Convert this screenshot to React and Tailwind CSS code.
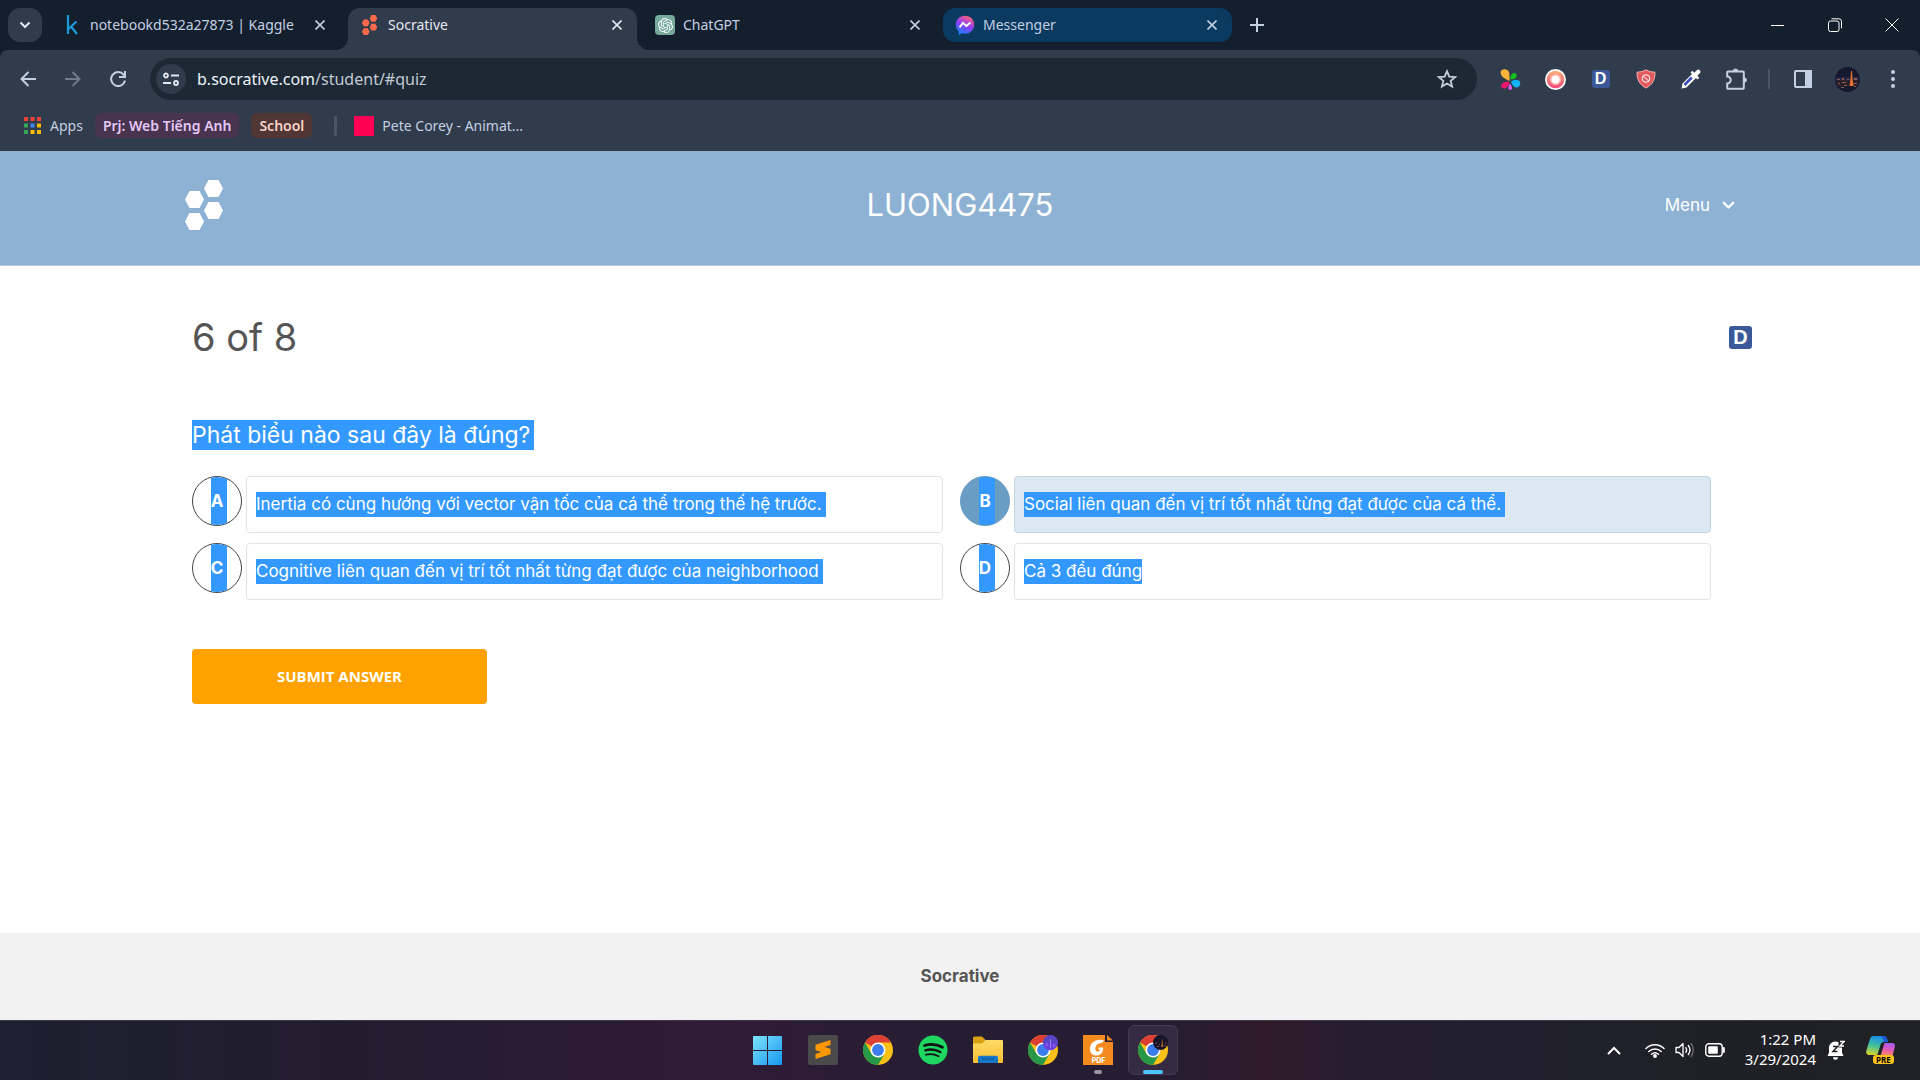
import React from "react";
import { SiOpenai } from "react-icons/si";

const hexes = [
  [28.5, 8.5],
  [9.5, 19.5],
  [28.5, 30.5],
  [9.5, 41.5],
];

function SocrativeLogo({ className }) {
  return (
    <svg viewBox="0 0 38 50" className={className} fill="currentColor" aria-hidden="true">
      {hexes.map(([x, y]) => (
        <polygon
          key={x + "-" + y}
          points={`${x - 9.5},${y} ${x - 5},${y - 8.5} ${x + 5},${y - 8.5} ${x + 9.5},${y} ${x + 5},${y + 8.5} ${x - 5},${y + 8.5}`}
        />
      ))}
    </svg>
  );
}

function MessengerIcon() {
  return (
    <svg viewBox="0 0 24 24" className="size-5" aria-hidden="true">
      <defs>
        <linearGradient id="msg" x1="0.25" y1="1" x2="0.7" y2="0">
          <stop offset="0" stopColor="#0a8cff" />
          <stop offset="0.5" stopColor="#8a3cff" />
          <stop offset="1" stopColor="#ff5f74" />
        </linearGradient>
      </defs>
      <path fill="url(#msg)" d="M12 1C5.600 1 1 5.600 1 11.700c0 3.200 1.300 6 3.500 7.900V24l3.800-2.200c1.200.3 2.400.5 3.700.5 6.400 0 11-4.500 11-10.600S18.400 1 12 1z" />
      <path d="M5.500 14.800 9.500 9.500l4.200 3.800 4.800-4.300" fill="none" stroke="#fff" strokeWidth="2.300" />
    </svg>
  );
}

function CloseIcon() {
  return (
    <svg viewBox="0 0 10 10" className="size-2.5" fill="none" stroke="currentColor" strokeWidth="1.600" aria-hidden="true">
      <path d="M.5.5l9 9M9.500.5l-9 9" />
    </svg>
  );
}

function Tab({ icon, title, kind, className }) {
  const skin =
    kind === "active"
      ? "h-[42px] rounded-t-xl bg-[#303b4b] pb-2 text-[#e3e8f0]"
      : kind === "group"
      ? "mb-2 h-[34px] rounded-xl bg-[#0a3a5f] text-[#c3cfe3]"
      : "mb-2 h-[34px] text-[#c3cfe3]";
  return (
    <div className={`relative flex min-w-0 items-center px-3 ${skin} ${className}`}>
      {kind === "active" && (
        <>
          <span className="absolute bottom-0 -left-3 size-3 bg-[radial-gradient(circle_at_0_0,transparent_12px,#303b4b_12px)]" />
          <span className="absolute bottom-0 -right-3 size-3 bg-[radial-gradient(circle_at_100%_0,transparent_12px,#303b4b_12px)]" />
        </>
      )}
      <span className="flex w-5 shrink-0 justify-center">{icon}</span>
      <span className="ml-2 flex-1 truncate text-[14px] leading-5">{title}</span>
      <button type="button" aria-label={`Close ${title}`} className="flex size-4 items-center justify-center">
        <CloseIcon />
      </button>
    </div>
  );
}

function IconButton({ label, className = "", children }) {
  return (
    <button type="button" aria-label={label} className={`flex size-[45px] shrink-0 items-center justify-center ${className}`}>
      {children}
    </button>
  );
}

function DBadge({ className }) {
  return (
    <span className={`flex items-center justify-center rounded-[3px] bg-[#3b5998] font-['Liberation_Sans',sans-serif] leading-none font-bold text-white ${className}`}>D</span>
  );
}

function TabStrip() {
  return (
    <div className="flex h-[50px] items-end bg-[#141f2e] pl-2">
      <button type="button" aria-label="Search tabs" className="mb-2 flex h-[34px] w-[34px] shrink-0 items-center justify-center rounded-xl bg-[#303b4b] text-[#e3e8f0]">
        <svg viewBox="0 0 12 8" className="w-3" fill="none" stroke="currentColor" strokeWidth="2">
          <path d="M1.500 1.500 6 6l4.500-4.500" />
        </svg>
      </button>
      <Tab
        className="ml-2 w-[290px]"
        title="notebookd532a27873 | Kaggle"
        icon={
          <svg viewBox="0 0 12 20" className="h-5" fill="none" stroke="#1a9bd7" strokeWidth="2.200" aria-hidden="true">
            <path d="M2 0v19M10.500 6.500 2.500 14M5 11.500l6 7.500" />
          </svg>
        }
      />
      <Tab className="ml-2 w-[289px]" kind="active" title="Socrative" icon={<SocrativeLogo className="h-5 text-[#ff6b4a]" />} />
      <Tab
        className="ml-[6px] w-[292px]"
        title="ChatGPT"
        icon={
          <span className="flex size-5 items-center justify-center rounded-[4px] bg-[#74a99c] text-white">
            <SiOpenai className="size-[15px]" />
          </span>
        }
      />
      <Tab className="ml-2 w-[289px]" kind="group" title="Messenger" icon={<MessengerIcon />} />
      <button type="button" aria-label="New tab" className="mb-2 ml-2 flex size-[34px] items-center justify-center text-[#c3cfe3]">
        <svg viewBox="0 0 14 14" className="size-[14px]" stroke="currentColor" strokeWidth="2">
          <path d="M7 0v14M0 7h14" />
        </svg>
      </button>
      <div className="ml-auto flex h-full items-center text-white">
        <button type="button" aria-label="Minimize" className="flex h-12 w-[57px] items-center justify-center">
          <span className="h-px w-[13px] bg-white" />
        </button>
        <button type="button" aria-label="Restore" className="flex h-12 w-[57px] items-center justify-center">
          <svg viewBox="0 0 14 14" className="size-[14px]" fill="none" stroke="currentColor">
            <rect x=".5" y="3" width="10.500" height="10.500" rx="2" />
            <path d="M3.500.8H11a2.500 2.500 0 0 1 2.500 2.500v7" />
          </svg>
        </button>
        <button type="button" aria-label="Close window" className="flex h-12 w-[57px] items-center justify-center">
          <svg viewBox="0 0 14 14" className="size-[14px]" fill="none" stroke="currentColor">
            <path d="M.5.5l13 13M13.500.5l-13 13" />
          </svg>
        </button>
      </div>
    </div>
  );
}

function Toolbar() {
  return (
    <div className="flex h-[58px] items-center rounded-t-lg bg-[#303b4b] px-[5px] text-[#c3cfe3]">
      <IconButton label="Back">
        <svg viewBox="0 0 16 16" className="size-4" fill="none" stroke="currentColor" strokeWidth="2">
          <path d="M16 8H1.500M8.500 1 1.500 8l7 7" />
        </svg>
      </IconButton>
      <IconButton label="Forward" className="text-[#6f7a8b]">
        <svg viewBox="0 0 16 16" className="size-4" fill="none" stroke="currentColor" strokeWidth="2">
          <path d="M0 8h14.500M7.500 1l7 7-7 7" />
        </svg>
      </IconButton>
      <IconButton label="Reload">
        <svg viewBox="0 0 16 16" className="size-4" fill="none" stroke="currentColor" strokeWidth="2">
          <path d="M15 9.500A7 7 0 1 1 13.500 3.500L15 5M15 0v6H9" />
        </svg>
      </IconButton>
      <div className="ml-[10px] flex h-[42px] flex-1 items-center rounded-full bg-[#1c2935] pl-[6px] pr-5">
        <button type="button" aria-label="Site information" className="flex size-[30px] shrink-0 items-center justify-center rounded-full bg-[#303b4b] text-[#e3e8f0]">
          <svg viewBox="0 0 16 14" className="w-4" fill="none" stroke="currentColor" strokeWidth="1.800">
            <circle cx="3" cy="3.500" r="2" />
            <path d="M8 3.500h8M0 11h8" />
            <circle cx="13" cy="11" r="2" />
          </svg>
        </button>
        <div className="relative ml-[11px] min-w-0 flex-1 text-[16px] leading-6">
          <input aria-label="Address" className="w-full bg-transparent text-transparent caret-white outline-none" />
          <span className="pointer-events-none absolute inset-0 text-[#c3cad4]">
            <span className="text-[#eef2f8]">b.socrative.com</span>/student/#quiz
          </span>
        </div>
        <button type="button" aria-label="Bookmark this tab" className="text-[#c7cdd6]">
          <svg viewBox="0 0 20 20" className="size-5" fill="none" stroke="currentColor" strokeWidth="1.800">
            <path d="M10 2.200l2.300 5.400 5.900.5-4.500 3.800 1.400 5.700L10 14.500l-5.100 3.100 1.400-5.700L1.800 8.100l5.900-.5z" />
          </svg>
        </button>
      </div>
      <div className="ml-[11px] flex items-center">
        <IconButton label="Photos extension">
          <svg viewBox="0 0 21 21" className="size-[21px]">
            <path d="M9.500 12C3 9.500 0 6 .7 2.600 1.800-.5 7.500-.7 9 3c.8 2.700.5 6 .5 9z" fill="#ffb43c" />
            <path d="M10.500 10.500C10 6.500 12 3.600 15 4c2.500.8 2 4.500 0 5.500-1.500.7-3 .8-4.500 1z" fill="#17c11d" />
            <path d="M11 13c2-2.500 5.500-3 8-1.500 2.500 2.500 1 6.500-2 7-3 .2-4.500-2.500-6-5.500z" fill="#12b5f5" />
            <path d="M9.500 13C5.500 12 1.500 13.500 1 16.500c0 2.500 3 4 5 2.500s2.500-3.500 3.500-6z" fill="#f5156e" />
            <path d="M10 14.500c-1.500 2-2.200 4-1.200 5.700 1 1.200 3 .8 3.200-.7.200-1.800-1-3.500-2-5z" fill="#e55cf0" />
          </svg>
        </IconButton>
        <IconButton label="Recorder extension">
          <svg viewBox="0 0 21 21" className="size-[21px]">
            <defs>
              <linearGradient id="rec" x1="0" y1="0" x2="0" y2="1">
                <stop offset="0" stopColor="#fbb07c" />
                <stop offset="1" stopColor="#f0477c" />
              </linearGradient>
            </defs>
            <circle cx="10.500" cy="10.500" r="10.500" fill="#fff" />
            <circle cx="10.500" cy="10.500" r="8.800" fill="url(#rec)" />
            <circle cx="10.500" cy="10.500" r="5.500" fill="#fbb3a8" />
            <circle cx="10.500" cy="10.500" r="4" fill="#fff" />
          </svg>
        </IconButton>
        <IconButton label="D extension">
          <DBadge className="size-[18px] text-[16px]" />
        </IconButton>
        <IconButton label="Ad blocker extension">
          <svg viewBox="0 0 20 20" className="size-5" fill="none">
            <path d="M10 .8C7 2.500 4 3 1 3.200.8 10 3.500 16 10 19c6.500-3 9.200-9 9-15.800-3-.2-6-.7-9-2.400z" fill="#e35b60" stroke="#f3b0b0" />
            <circle cx="10" cy="9.500" r="3.800" stroke="#fff" strokeWidth="1" />
            <path d="M7.300 7l5.400 5" stroke="#fff" strokeWidth="1" />
          </svg>
        </IconButton>
        <IconButton label="Color picker extension">
          <svg viewBox="0 0 20 20" className="size-5">
            <path d="M11.500 4.500 1.500 14.500 0.500 19.500l5-1L15.500 8.500z" fill="#fff" />
            <path d="M10.800 8.500 3.500 16" stroke="#3c4fc0" strokeWidth="2.600" />
            <path d="M9.500 3.500l7 7 1.800-1.800-2-2 2.500-2.500c2-2-1-5-3-3l-2.500 2.500-2-2z" fill="#fff" />
          </svg>
        </IconButton>
        <IconButton label="Extensions">
          <svg viewBox="0 0 22 22" className="size-[22px]" fill="none" stroke="currentColor" strokeWidth="2">
            <path d="M3 3.500h15a.8.8 0 0 1 .8.800V20a.8.8 0 0 1-.8.800H3a.8.8 0 0 1-.8-.8v-4.500a3.500 3.500 0 0 0 0-7V4.300a.8.8 0 0 1 .8-.8z" />
            <path d="M8 3.500a2.500 2.500 0 0 1 5 0zM18.800 9.500a2.500 2.500 0 0 1 0 5z" fill="currentColor" strokeWidth="1" />
          </svg>
        </IconButton>
        <span className="mx-[10px] h-5 w-[2px] bg-[#4a5668]" />
        <IconButton label="Side panel">
          <svg viewBox="0 0 18 18" className="size-[18px]" fill="none" stroke="currentColor" strokeWidth="2">
            <rect x="1" y="1" width="16" height="16" rx="1" />
            <path d="M12 1h5v16h-5z" fill="currentColor" />
          </svg>
        </IconButton>
        <IconButton label="Profile">
          <CityAvatar className="size-[25px]" />
        </IconButton>
        <IconButton label="Browser menu">
          <svg viewBox="0 0 4 18" className="h-[18px]" fill="currentColor">
            <circle cx="2" cy="2" r="2" />
            <circle cx="2" cy="9" r="2" />
            <circle cx="2" cy="16" r="2" />
          </svg>
        </IconButton>
      </div>
    </div>
  );
}

function CityAvatar({ className }) {
  return (
    <svg viewBox="0 0 25 25" className={className} aria-hidden="true">
      <circle cx="12.500" cy="12.500" r="12.500" fill="#15182e" />
      <path d="M.5 10h24v3H.5z" fill="#232646" />
      <path d="M1 13h23l-1.500 6h-20z" fill="#2c2028" />
      <path d="M2 12h3v1H2zM7 11h2v2H7zM12 12h2v1h-2zM19 11h3v2h-3zM3 16h2v1H3zM7 15h4v1H7zM9 18h3v1H9zM18 16h4v1h-4zM6 20h3v1H6zM19 19h2v1h-2z" fill="#8f5a50" />
      <path d="M16 4h1l.5 8 1 7h-4l1-7z" fill="#e8702c" />
    </svg>
  );
}

const appDots = ["#ea4335", "#ea4335", "#ea4335", "#34a853", "#4285f4", "#fbbc04", "#34a853", "#fbbc04", "#fbbc04"];

function BookmarksBar() {
  return (
    <nav aria-label="Bookmarks" className="flex h-[43px] items-center bg-[#303b4b] pb-2 pl-6 text-[14px] leading-5 text-[#c3cfe3]">
      <a href="#apps" className="flex items-center">
        <svg viewBox="0 0 17 17" className="size-[17px]" aria-hidden="true">
          {appDots.map((c, i) => (
            <rect key={i} x={(i % 3) * 6.500} y={Math.floor(i / 3) * 6.500} width="4" height="4" fill={c} />
          ))}
        </svg>
        <span className="ml-[9px]">Apps</span>
      </a>
      <button type="button" className="ml-3 h-[25px] rounded-md bg-[#48344f] px-2 font-semibold text-[#e6c8f8]">Prj: Web Tiếng Anh</button>
      <button type="button" className="ml-3 h-[25px] rounded-md bg-[#503634] px-2 font-semibold text-[#fbd3c6]">School</button>
      <span className="ml-[22px] h-5 w-[3px] rounded bg-[#4a5668]" />
      <a href="#pete" className="ml-[17px] flex items-center">
        <span className="size-5 bg-[#ff0055]" />
        <span className="ml-2">Pete Corey - Animat...</span>
      </a>
    </nav>
  );
}

const answers = [
  { id: "A", text: "Inertia có cùng hướng với vector vận tốc của cá thể trong thế hệ trước.", tail: true },
  { id: "B", text: "Social liên quan đến vị trí tốt nhất từng đạt được của cá thể.", tail: true, chosen: true },
  { id: "C", text: "Cognitive liên quan đến vị trí tốt nhất từng đạt được của neighborhood", tail: true },
  { id: "D", text: "Cả 3 đều đúng" },
];

function Answer({ id, text, tail, chosen }) {
  return (
    <button type="button" aria-pressed={!!chosen} className="mr-[17px] flex items-start gap-1 text-left">
      <span
        className={`flex size-[50px] shrink-0 justify-center overflow-hidden rounded-full border ${
          chosen ? "border-[#6a9dc4] bg-[#6a9dc4]" : "border-[#444]"
        }`}
      >
        <span className="-mr-1 bg-[#3399ff] pr-1 text-[17px] leading-[48px] font-bold text-white">{id}</span>
      </span>
      <span
        className={`flex min-h-[57px] flex-1 items-center rounded-[4px] border px-[9px] text-[17px] leading-[25px] text-white ${
          chosen ? "border-[#c3d5e3] bg-[#dce8f2]" : "border-[#e2e4ec]"
        }`}
      >
        <span className={`bg-[#3399ff] ${tail ? "pr-1" : ""}`}>{text}</span>
      </span>
    </button>
  );
}

function Page() {
  return (
    <div className="flex flex-1 flex-col bg-white font-[Inter,sans-serif]">
      <header className="grid h-[115px] grid-cols-3 items-center border-b border-[#b5c9da] bg-[#8db2d3] px-[185px] pb-[6px] text-white">
        <a href="#home" aria-label="Socrative home" className="w-[38px]">
          <SocrativeLogo className="w-[38px]" />
        </a>
        <h1 className="text-center text-[31px] leading-9">LUONG4475</h1>
        <button type="button" className="flex items-center gap-3 justify-self-end text-[17px] leading-6">
          Menu
          <svg viewBox="0 0 14 9" className="w-[13px]" fill="none" stroke="currentColor" strokeWidth="2.600" strokeLinecap="round" strokeLinejoin="round">
            <path d="M2 2l5 5 5-5" />
          </svg>
        </button>
      </header>
      <main className="mx-auto flex w-4/5 flex-1 flex-col pt-12">
        <div className="flex items-center justify-between">
          <h2 className="text-[38px] leading-[46px] text-[#555]">6 of 8</h2>
          <DBadge className="-mr-6 size-[23px] text-[20px]" />
        </div>
        <p className="mt-[60px] text-[23px] leading-[30px] text-white">
          <span className="inline-block bg-[#3399ff] pr-1">Phát biểu nào sau đây là đúng?</span>
        </p>
        <div className="mt-[26px] grid grid-cols-2 gap-y-[10px]">
          {answers.map((a) => (
            <Answer key={a.id} {...a} />
          ))}
        </div>
        <button type="button" className="mt-[49px] h-[55px] w-[295px] rounded-[4px] bg-[#ffa200] font-['Open_Sans',sans-serif] text-[15px] font-bold text-white">
          SUBMIT ANSWER
        </button>
      </main>
      <footer className="flex h-[87px] items-center justify-center bg-[#f2f2f2] text-[17px] font-bold text-[#555]">Socrative</footer>
    </div>
  );
}

function ChromeIcon({ children }) {
  return (
    <svg viewBox="0 0 30 30" className="size-[30px]" aria-hidden="true">
      <circle cx="15" cy="15" r="15" fill="#fbc116" />
      <path d="M15 15 2 7.500A15 15 0 0 1 28 7.500H15z" fill="#dd4033" />
      <path d="M2 7.500A15 15 0 0 0 15 30l6.500-11.200L15 15 8.500 18.700z" fill="#279847" />
      <circle cx="15" cy="15" r="7.500" fill="#fff" />
      <circle cx="15" cy="15" r="5.900" fill="#3b7ded" />
      {children}
    </svg>
  );
}

function TaskButton({ label, className = "", children, mark }) {
  return (
    <button type="button" aria-label={label} className={`relative flex size-[50px] items-center justify-center rounded-md border ${className || "border-transparent"}`}>
      {children}
      {mark && <span className={`absolute bottom-0 h-1 rounded-full ${mark}`} />}
    </button>
  );
}

function Taskbar() {
  return (
    <div className="grid h-[60px] grid-cols-[1fr_auto_1fr] items-center border-t border-[#3a3642] bg-[linear-gradient(90deg,#1c2030_0%,#241c30_20%,#301b37_38%,#271d33_48%,#251d33_60%,#301b2b_66%,#231e30_72%,#1f2029_84%,#202124_100%)] text-white">
      <div className="col-start-2 flex gap-[5px] pb-px">
        <TaskButton label="Start">
          <svg viewBox="0 0 29 29" className="size-[29px]">
            <defs>
              <linearGradient id="win" x1="0" y1="0" x2="1" y2="1">
                <stop offset="0" stopColor="#7fe3fb" />
                <stop offset="1" stopColor="#1597f2" />
              </linearGradient>
            </defs>
            <path fill="url(#win)" d="M1 0h13v14H0V1a1 1 0 0 1 1-1zM15 0h13a1 1 0 0 1 1 1v13H15zM0 15h14v14H1a1 1 0 0 1-1-1zM15 15h14v13a1 1 0 0 1-1 1H15z" />
          </svg>
        </TaskButton>
        <TaskButton label="Sublime Text">
          <svg viewBox="0 0 30 30" className="size-[30px]">
            <rect width="30" height="30" rx="2" fill="#4b4a4a" />
            <path d="M22.500 5 7.500 9.800v5.400l6 1.800-6 2V24l15-4.800v-5.400l-6-1.800 6-2z" fill="#ff9800" />
          </svg>
        </TaskButton>
        <TaskButton label="Chrome">
          <ChromeIcon />
        </TaskButton>
        <TaskButton label="Spotify">
          <svg viewBox="0 0 30 30" className="size-[30px]" fill="none" stroke="#111" strokeLinecap="round">
            <circle cx="15" cy="15" r="14.500" fill="#1ed760" stroke="none" />
            <path d="M6.500 10.500c6-1.800 12.500-1.200 18 1.800" strokeWidth="2.800" />
            <path d="M7.300 15.300c5-1.400 10.500-.9 15 1.800" strokeWidth="2.300" />
            <path d="M8 19.700c4.300-1.100 8.700-.7 12.500 1.500" strokeWidth="1.900" />
          </svg>
        </TaskButton>
        <TaskButton label="File Explorer">
          <svg viewBox="0 0 30 28" className="w-[30px]">
            <defs>
              <linearGradient id="fold" x1="0" y1="0" x2="0" y2="1">
                <stop offset="0" stopColor="#ffdb68" />
                <stop offset="1" stopColor="#f7bd2f" />
              </linearGradient>
            </defs>
            <path d="M0 2a1.500 1.500 0 0 1 1.500-1.500H9L12.500 4v5H0z" fill="#d9a012" />
            <path d="M0 7.500h9l3.500-3.500H29a1 1 0 0 1 1 1V26a1 1 0 0 1-1 1H1a1 1 0 0 1-1-1z" fill="url(#fold)" />
            <path d="M5 27v-5.500A1.800 1.800 0 0 1 6.800 19.700h16.400a1.800 1.800 0 0 1 1.800 1.800V27z" fill="#1577c5" />
            <path d="M9 23h12" stroke="#0b528f" strokeWidth="1" />
          </svg>
        </TaskButton>
        <TaskButton label="Chrome, second profile">
          <ChromeIcon>
            <circle cx="22.500" cy="7.500" r="7.500" fill="#5a45c8" />
            <path d="M15.500 9.500c4-3 10-1 14-1l-1 3c-2 4.500-9 5-12 1z" fill="#6f3fe0" />
            <path d="M19 8v3M22.500 4v9M26 9v3" stroke="#8d96f0" strokeWidth=".8" />
          </ChromeIcon>
        </TaskButton>
        <TaskButton label="Foxit PDF" mark="w-2 bg-[#98949f]">
          <svg viewBox="0 0 30 30" className="size-[30px]">
            <path d="M0 0h22v7h8v23H0z" fill="#f58a1f" />
            <path d="M24 0v5.500h6z" fill="#f58a1f" />
            <path d="M21 5.500C16 3.500 8 6 7 12.500 6.300 18 10 21 14 20.500c4.500-.5 6.800-4.500 6-8h-4.500v2.300h1.700c-.5 1.500-1.800 2.200-3.200 1.700-2.500-1-2-6 1-7.500 1.800-.9 4-.2 6-3.500z" fill="#fff" />
            <text x="15.500" y="28" textAnchor="middle" fontSize="7" fontWeight="800" fontFamily="Inter, sans-serif" fill="#fff">PDF</text>
          </svg>
        </TaskButton>
        <TaskButton label="Chrome, current profile" className="border-[#453b50] bg-[#352b42]" mark="w-5 bg-[#4cc2ff]">
          <ChromeIcon>
            <circle cx="22.500" cy="7.500" r="7.500" fill="#151426" />
            <path d="M24.200 3l.8 9h-1.600z" fill="#e0783a" />
            <path d="M17 8h2M20.500 9.500h1.500M27 8h1.500M19 11.500h2M26 11h2" stroke="#9a5a48" strokeWidth=".9" />
          </ChromeIcon>
        </TaskButton>
      </div>
      <div className="flex items-center justify-end pr-6 pb-px">
        <button type="button" aria-label="Show hidden icons" className="mr-6">
          <svg viewBox="0 0 14 9" className="w-[14px]" fill="none" stroke="currentColor" strokeWidth="2">
            <path d="M1 8l6-6 6 6" />
          </svg>
        </button>
        <button type="button" aria-label="Network, volume and battery" className="flex items-center gap-[10px]">
          <svg viewBox="0 0 20 15" className="w-5" fill="none" stroke="currentColor" strokeWidth="1.500" strokeLinecap="round">
            <path d="M1 5.500c5-5 13-5 18 0M3.800 8.500c3.500-3.400 8.900-3.400 12.400 0M6.600 11.200c2-1.800 4.800-1.800 6.800 0" />
            <circle cx="10" cy="13" r="1.200" fill="currentColor" />
          </svg>
          <svg viewBox="0 0 20 16" className="w-5" fill="none" stroke="currentColor" strokeWidth="1.300" strokeLinecap="round" strokeLinejoin="round">
            <path d="M1 5.500h3L8 1.500v13l-4-4H1z" />
            <path d="M10.800 5.500c1 1.500 1 3.500 0 5M13.300 3.500c2 2.600 2 6.400 0 9" />
            <path d="M16 1.500c3 3.700 3 9.300 0 13" stroke="#6b6b70" />
          </svg>
          <svg viewBox="0 0 20 14" className="w-5" fill="none" stroke="currentColor" strokeWidth="1.400">
            <rect x=".8" y=".8" width="16.400" height="12.400" rx="3" />
            <rect x="3.200" y="3.200" width="9.600" height="7.600" rx="1" fill="currentColor" stroke="none" />
            <path d="M18.800 5v4" strokeWidth="2" strokeLinecap="round" />
          </svg>
        </button>
        <div className="ml-5 pb-[2px] text-right text-[15px] leading-5">
          <div>1:22 PM</div>
          <div>3/29/2024</div>
        </div>
        <button type="button" aria-label="Notifications" className="ml-[11px]">
          <svg viewBox="0 0 18 20" className="w-[18px]">
            <path d="M8.500 1.500C4.500 1.500 2 4.500 2 8v4.500L.5 16h16L15 12.500V8c0-3.500-2.500-6.500-6.500-6.500z" fill="#fff" />
            <path d="M6 17.200h5a2.500 2.500 0 0 1-5 0z" fill="#fff" />
            <path d="M11.500 0h6.500v7.500h-6.500z" fill="#202124" />
            <path d="M13 1.500h4L13 6h4" fill="none" stroke="#fff" strokeWidth="1.400" />
            <path d="M6 6.500h4.500L6 11.500h4.500" fill="none" stroke="#202124" strokeWidth="1.500" />
          </svg>
        </button>
        <button type="button" aria-label="Copilot" className="relative ml-[21px] size-[30px]">
          <svg viewBox="0 0 30 30" className="size-[30px]">
            <defs>
              <linearGradient id="cpa" x1="0.500" y1="0" x2="0.300" y2="1">
                <stop offset="0" stopColor="#1b8be8" />
                <stop offset="0.500" stopColor="#3fc0a0" />
                <stop offset="1" stopColor="#d6d32a" />
              </linearGradient>
              <linearGradient id="cpb" x1="0.600" y1="0" x2="0.400" y2="1">
                <stop offset="0" stopColor="#a25af0" />
                <stop offset="0.500" stopColor="#e05bb8" />
                <stop offset="1" stopColor="#ff8a5a" />
              </linearGradient>
            </defs>
            <path d="M7.500 1h10c2.500 0 3.500 2 4.500 6h-4c-2 0-3 1-3.600 3L12 18c-.6 2-1.500 2-3 2H4c-3 0-4.500-1.500-3.500-5L4 4c.7-2 1.500-3 3.500-3z" fill="url(#cpa)" />
            <path d="M14 1h4c2.500 0 3 2 4 6h-4c-1-3.500-2-6-4-6z" fill="#1c57d6" />
            <path d="M18.500 8H26c2.500 0 3.500 1.500 2.800 4L26.500 21H14.500z" fill="url(#cpb)" />
          </svg>
          <span className="absolute top-5 left-[7px] rounded-[3px] bg-[#fbc21b] px-[3px] text-[8px] leading-[9px] font-bold text-black">PRE</span>
        </button>
      </div>
    </div>
  );
}

export default function App() {
  return (
    <div className="flex min-h-screen flex-col bg-[#141f2e] font-['Noto_Sans',sans-serif]">
      <TabStrip />
      <Toolbar />
      <BookmarksBar />
      <Page />
      <Taskbar />
    </div>
  );
}
